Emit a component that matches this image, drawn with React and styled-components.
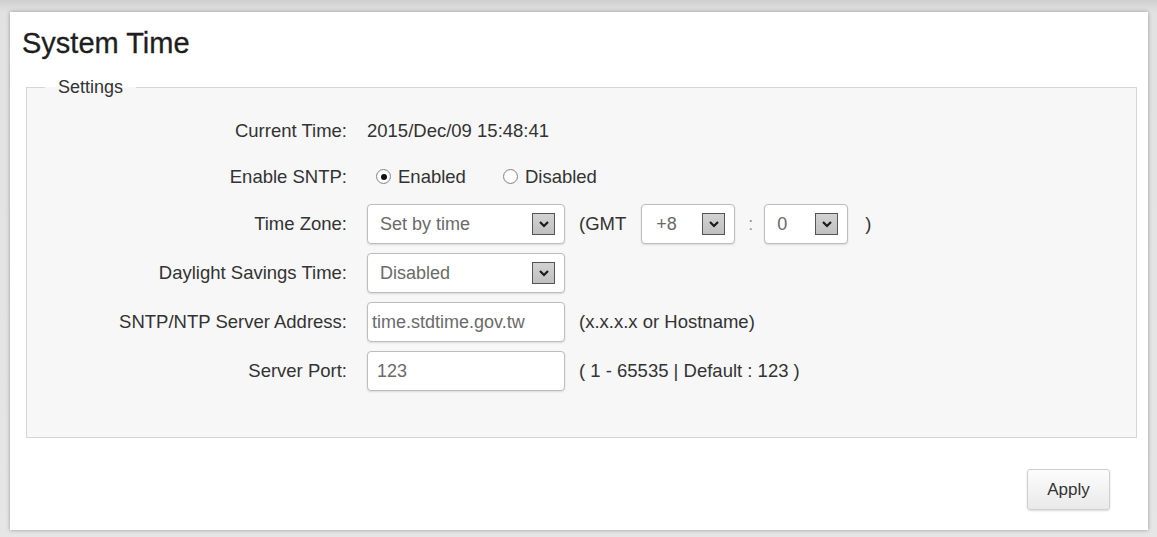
import React, { useState } from "react";
import styled, { createGlobalStyle } from "styled-components";

const GlobalStyle = createGlobalStyle`
  html, body {
    margin: 0;
    padding: 0;
  }
  body {
    background: #d8d8d8;
    font-family: "Liberation Sans", Arial, sans-serif;
    color: #333;
  }
`;

const Page = styled.div`
  width: 1157px;
  height: 537px;
  padding: 12px 9px 7px 10px;
  box-sizing: border-box;
  background: linear-gradient(#cfcfcf, #e2e2e2 12px, #e6e6e6);
`;

const Panel = styled.div`
  height: 100%;
  background: #fff;
  box-shadow: 0 0 4px rgba(0, 0, 0, 0.35);
  padding: 15px 11px 0 12px;
  box-sizing: border-box;
  display: flex;
  flex-direction: column;
`;

const Title = styled.h1`
  margin: 0 0 18px;
  font-size: 29px;
  font-weight: normal;
  color: #1e1e1e;
  line-height: 32px;
  -webkit-text-stroke: 0.3px #1e1e1e;
`;

const Fieldset = styled.fieldset`
  margin: 0 0 0 4px;
  padding: 15px 0 46px;
  border: 1px solid #d6d6d6;
  background: #f7f7f7;
  min-width: 0;
`;

const Legend = styled.legend`
  margin-left: 18px;
  padding: 0 13px;
  font-size: 18px;
  color: #333;
  line-height: 20px;
`;

const Form = styled.div`
  display: grid;
  grid-template-columns: 320px 1fr;
  column-gap: 20px;
  row-gap: 9px;
  align-items: center;
`;

const Label = styled.div`
  text-align: right;
  font-size: 18.5px;
  color: #333;
  height: ${(p) => p.$h || 40}px;
  line-height: ${(p) => p.$h || 40}px;
`;

const Value = styled.div`
  display: flex;
  align-items: center;
  font-size: 18.5px;
  color: #333;
  height: ${(p) => p.$h || 40}px;
`;

const RadioLabel = styled.label`
  display: flex;
  align-items: center;
  margin-left: ${(p) => p.$ml || 0}px;
  cursor: pointer;
`;

const RadioDot = styled.span`
  width: 15px;
  height: 15px;
  border-radius: 50%;
  border: 1px solid #888;
  background: radial-gradient(circle, #fff 55%, #dcdcdc);
  box-sizing: border-box;
  margin-right: 7px;
  display: flex;
  align-items: center;
  justify-content: center;
  &::after {
    content: "";
    width: 6px;
    height: 6px;
    border-radius: 50%;
    background: ${(p) => (p.$on ? "#111" : "transparent")};
  }
`;

const Box = styled.div`
  width: ${(p) => p.$w}px;
  height: 40px;
  box-sizing: border-box;
  border: 1px solid #bdbdbd;
  border-radius: 4px;
  background: #fff;
  box-shadow: 0 1px 2px rgba(0, 0, 0, 0.12);
  display: flex;
  align-items: center;
  padding: 0 9px 0 ${(p) => p.$pl ?? 12}px;
  font-size: 18px;
  color: #6a6a6a;
  flex-shrink: 0;
  overflow: hidden;
`;

const BoxText = styled.span`
  flex: 1;
  white-space: nowrap;
`;

const ArrowButton = styled.span`
  width: 23px;
  height: 22px;
  box-sizing: border-box;
  border: 1px solid #555;
  background: linear-gradient(#d2d2d2, #c0c0c0);
  display: flex;
  align-items: center;
  justify-content: center;
  flex-shrink: 0;
`;

const Note = styled.span`
  font-size: 18.5px;
  color: #333;
  margin-left: ${(p) => p.$ml || 14}px;
  white-space: nowrap;
`;

const Sep = styled.span`
  font-size: 18px;
  color: #999;
  margin: 0 11px 0 13px;
`;

const Footer = styled.div`
  display: flex;
  justify-content: flex-end;
  padding: 31px 27px 0 0;
`;

const ApplyButton = styled.button`
  width: 83px;
  height: 41px;
  font-family: "Liberation Sans", Arial, sans-serif;
  font-size: 17px;
  color: #333;
  border: 1px solid #cfcfcf;
  border-radius: 3px;
  background: linear-gradient(#fdfdfd, #e9e9e9);
  box-shadow: 0 1px 2px rgba(0, 0, 0, 0.15);
  cursor: pointer;
`;

const Chevron = () => (
  <svg width="12" height="8" viewBox="0 0 12 8">
    <polyline
      points="2,2 6,6 10,2"
      fill="none"
      stroke="#1a1a1a"
      strokeWidth="2.2"
    />
  </svg>
);

const Select = ({ width, value, pl }) => (
  <Box $w={width} $pl={pl}>
    <BoxText>{value}</BoxText>
    <ArrowButton>
      <Chevron />
    </ArrowButton>
  </Box>
);

const App = () => {
  const [sntp, setSntp] = useState(true);

  return (
    <>
      <GlobalStyle />
      <Page>
        <Panel>
          <Title>System Time</Title>
          <Fieldset>
            <Legend>Settings</Legend>
            <Form>
              <Label $h={37}>Current Time:</Label>
              <Value $h={37}>2015/Dec/09 15:48:41</Value>

              <Label $h={37}>Enable SNTP:</Label>
              <Value $h={37}>
                <RadioLabel $ml={9} onClick={() => setSntp(true)}>
                  <RadioDot $on={sntp} />
                  Enabled
                </RadioLabel>
                <RadioLabel $ml={37} onClick={() => setSntp(false)}>
                  <RadioDot $on={!sntp} />
                  Disabled
                </RadioLabel>
              </Value>

              <Label>Time Zone:</Label>
              <Value>
                <Select width={198} value="Set by time" />
                <Note>(GMT</Note>
                <Note $ml={15}>
                  <Select width={94} value="+8" pl={14} />
                </Note>
                <Sep>:</Sep>
                <Select width={84} value="0" />
                <Note $ml={17}>)</Note>
              </Value>

              <Label>Daylight Savings Time:</Label>
              <Value>
                <Select width={198} value="Disabled" />
              </Value>

              <Label>SNTP/NTP Server Address:</Label>
              <Value>
                <Box $w={198} $pl={4}>
                  <BoxText>time.stdtime.gov.tw</BoxText>
                </Box>
                <Note>(x.x.x.x or Hostname)</Note>
              </Value>

              <Label>Server Port:</Label>
              <Value>
                <Box $w={198} $pl={9}>
                  <BoxText>123</BoxText>
                </Box>
                <Note>( 1 - 65535 | Default : 123 )</Note>
              </Value>
            </Form>
          </Fieldset>
          <Footer>
            <ApplyButton>Apply</ApplyButton>
          </Footer>
        </Panel>
      </Page>
    </>
  );
};

export default App;
